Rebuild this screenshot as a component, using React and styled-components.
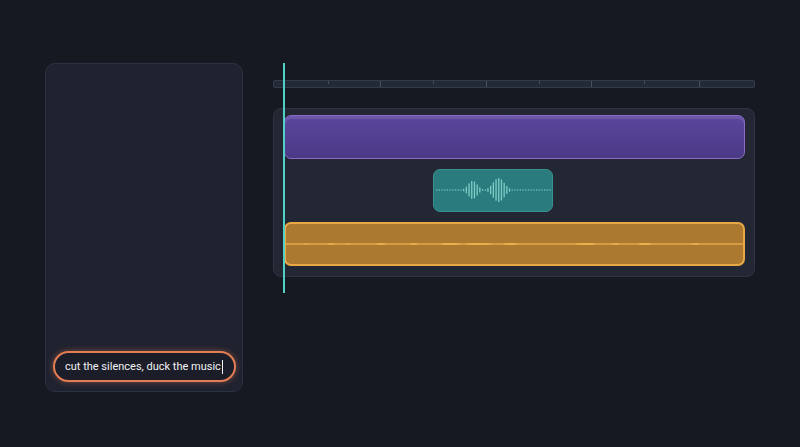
import React from "react";
import styled, { createGlobalStyle } from "styled-components";

const GlobalStyle = createGlobalStyle`
  html, body {
    margin: 0;
    padding: 0;
    background: #161822;
    font-family: Roboto, "Liberation Sans", sans-serif;
  }
  * { box-sizing: border-box; }
`;

const Page = styled.div`
  width: 800px;
  height: 447px;
  display: flex;
  align-items: flex-start;
  gap: 30px;
  padding: 63px 0 0 45px;
  background: #161822;
  overflow: hidden;
`;

const Panel = styled.div`
  width: 198px;
  height: 329px;
  display: flex;
  flex-direction: column;
  justify-content: flex-end;
  padding: 0 6px 9px 7px;
  border-radius: 10px;
  background: #1f222f;
  border: 1px solid #2b3140;
`;

const Prompt = styled.div`
  height: 31px;
  display: flex;
  align-items: center;
  padding: 0 10px;
  border-radius: 16px;
  background: #1b1d28;
  border: 2px solid #e27d54;
  box-shadow: 0 0 6px rgba(226, 125, 84, 0.45);
  color: #f2f2f4;
  font-size: 11px;
  white-space: nowrap;
`;

const Caret = styled.span`
  display: inline-block;
  width: 1px;
  height: 14px;
  margin-left: 1px;
  background: #f2f2f4;
`;

const Timeline = styled.div`
  position: relative;
  width: 482px;
  padding-top: 17px;
`;

const Ruler = styled.div`
  position: relative;
  height: 8px;
  border-radius: 2px;
  background: #242a35;
  border: 1px solid #323b48;
`;

const Tick = styled.div`
  position: absolute;
  top: 0;
  width: 1px;
  height: ${(p) => (p.$major ? 6 : 3)}px;
  background: #44505e;
`;

const Tracks = styled.div`
  margin-top: 20px;
  height: 169px;
  display: flex;
  flex-direction: column;
  gap: 10px;
  padding: 6px 9px 10px 10px;
  border-radius: 8px;
  background: #232633;
  border: 1px solid #2e3442;
`;

const Clip = styled.div`
  position: relative;
  height: 44px;
  border-radius: 7px;
  overflow: hidden;
`;

const VideoClip = styled(Clip)`
  background: linear-gradient(#5a479c, #4a3a86);
  border: 1px solid #8a6cc6;
  box-shadow: inset 0 3px 0 rgba(150, 120, 200, 0.35);
`;

const VoiceClip = styled(Clip)`
  width: 120px;
  margin-left: 149px;
  background: #2a7b7d;
  border: 1px solid #3a928f;
  display: flex;
  align-items: center;
  justify-content: center;
`;

const MusicClip = styled(Clip)`
  background: #ab792f;
  border: 2px solid #e9a843;
  display: flex;
  align-items: center;
`;

const Playhead = styled.div`
  position: absolute;
  left: 10px;
  top: 0;
  width: 2px;
  height: 230px;
  background: #4fd1c5;
`;

const ticks = [54, 106, 159, 212, 265, 317, 370, 425];

const voiceBars = Array.from({ length: 43 }, (_, i) => {
  const x = 2 + i * 2.7;
  const a = 9 * Math.exp(-((x - 38) ** 2) / (2 * 4.5 ** 2));
  const b = 12 * Math.exp(-((x - 64) ** 2) / (2 * 5.5 ** 2));
  const h = Math.max(1.4, (a + b) * 2);
  return { x, h };
});

const VoiceWave = () => (
  <svg width="118" height="30" viewBox="0 0 118 30">
    {voiceBars.map((b) => (
      <rect
        key={b.x}
        x={b.x}
        y={15 - b.h / 2}
        width="1.3"
        height={b.h}
        fill="#86d6cf"
        opacity={b.h > 2 ? 0.9 : 0.75}
      />
    ))}
  </svg>
);

const musicBlobs = [
  [20, 2, 0.6], [45, 4, 0.7], [62, 3, 0.6], [95, 5, 0.8], [128, 4, 0.7],
  [165, 10, 0.9], [193, 14, 1.1], [225, 7, 0.9], [300, 10, 1],
  [330, 4, 0.8], [360, 7, 0.9], [410, 4, 0.7],
];

const MusicWave = () => (
  <svg width="100%" height="10" viewBox="0 0 458 10" preserveAspectRatio="none">
    <rect x="0" y="4.4" width="458" height="1.2" fill="#f0b550" />
    {musicBlobs.map(([cx, rx, ry]) => (
      <ellipse key={cx} cx={cx} cy="5" rx={rx} ry={ry} fill="#f0b550" opacity="0.85" />
    ))}
  </svg>
);

export default function App() {
  return (
    <>
      <GlobalStyle />
      <Page>
        <Panel>
          <Prompt>
            cut the silences, duck the music
            <Caret />
          </Prompt>
        </Panel>
        <Timeline>
          <Ruler>
            {ticks.map((x, i) => (
              <Tick key={x} $major={i % 2 === 1} style={{ left: x }} />
            ))}
          </Ruler>
          <Tracks>
            <VideoClip />
            <VoiceClip>
              <VoiceWave />
            </VoiceClip>
            <MusicClip>
              <MusicWave />
            </MusicClip>
          </Tracks>
          <Playhead />
        </Timeline>
      </Page>
    </>
  );
}
